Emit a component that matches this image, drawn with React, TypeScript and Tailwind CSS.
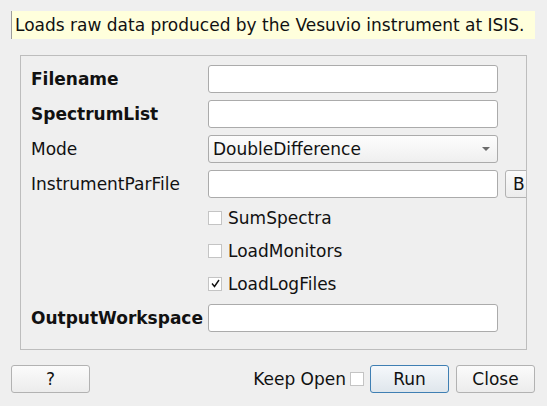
const font = { fontFamily: '"DejaVu Sans", "Liberation Sans", sans-serif' };

function TextBox() {
  return <div className="h-[28px] w-[290px] shrink-0 rounded-[3px] border border-[#ababab] bg-white" />;
}

function Check({ label, checked }: { label: string; checked?: boolean }) {
  return (
    <div className="flex h-[33px] items-center">
      <div className="flex h-[14px] w-[14px] shrink-0 items-center justify-center border border-[#c4c4c4] bg-white">
        {checked && (
          <svg width="9" height="9" viewBox="0 0 9 9">
            <path d="M1 4.5 L3.5 7.5 L8 1" fill="none" stroke="#111" strokeWidth="1.4" />
          </svg>
        )}
      </div>
      <span className="ml-[6px] pt-[2px]">{label}</span>
    </div>
  );
}

function Button({ children, primary, className = "" }: { children: React.ReactNode; primary?: boolean; className?: string }) {
  return (
    <button
      className={
        "flex h-[28px] w-[79px] shrink-0 items-center justify-center rounded-[3px] border pt-[2px] " +
        (primary
          ? "border-[#3f7fb3] bg-gradient-to-b from-[#f5f8fb] to-[#dfe6ec]"
          : "border-[#b2b2b2] bg-gradient-to-b from-[#fbfbfb] to-[#ececec]") +
        " " +
        className
      }
    >
      {children}
    </button>
  );
}

export default function App() {
  return (
    <div className="h-[406px] w-[547px] overflow-hidden bg-[#efefef] text-[17px] text-[#111]" style={font}>
      <div className="pl-[11px] pt-[11px]">
        <div className="flex h-[28px] w-[524px] items-center whitespace-nowrap border-l border-[#9d9d9d] bg-[#ffffdc] pl-[3px] pt-[2px]">
          Loads raw data produced by the Vesuvio instrument at ISIS.
        </div>
      </div>

      <div className="ml-[20px] mt-[16px] h-[295px] w-[507px] overflow-hidden border border-[#bdbdbd] pl-[10px] pt-[9px]">
        <div className="flex h-[28px] items-center">
          <span className="w-[177px] shrink-0 pt-[2px] font-bold">Filename</span>
          <TextBox />
        </div>
        <div className="mt-[7px] flex h-[28px] items-center">
          <span className="w-[177px] shrink-0 pt-[2px] font-bold">SpectrumList</span>
          <TextBox />
        </div>
        <div className="mt-[7px] flex h-[28px] items-center">
          <span className="w-[177px] shrink-0 pt-[2px]">Mode</span>
          <div className="flex h-[28px] w-[290px] shrink-0 items-center justify-between rounded-[3px] border border-[#ababab] bg-gradient-to-b from-[#fdfdfd] to-[#efefef] pl-[4px] pr-[7px]">
            <span className="pt-[2px]">DoubleDifference</span>
            <svg width="8" height="5" viewBox="0 0 8 5">
              <path d="M0 0 H8 L4 4 Z" fill="#6b6b6b" />
            </svg>
          </div>
        </div>
        <div className="mt-[7px] flex h-[28px] items-center">
          <span className="w-[177px] shrink-0 whitespace-nowrap pt-[2px]">InstrumentParFile</span>
          <TextBox />
          <div className="ml-[7px] flex h-[28px] w-[40px] shrink-0 items-center rounded-[3px] border border-[#b2b2b2] bg-gradient-to-b from-[#fbfbfb] to-[#ececec] pl-[7px] pt-[2px]">
            B
          </div>
        </div>
        <div className="ml-[177px] mt-[3px]">
          <Check label="SumSpectra" />
          <Check label="LoadMonitors" />
          <Check label="LoadLogFiles" checked />
        </div>
        <div className="mt-[4px] flex h-[28px] items-center">
          <span className="w-[177px] shrink-0 whitespace-nowrap pt-[2px] font-bold">OutputWorkspace</span>
          <TextBox />
        </div>
      </div>

      <div className="mt-[15px] flex items-center pl-[11px] pr-[12px]">
        <Button>?</Button>
        <div className="flex-1" />
        <span className="pt-[2px]">Keep Open</span>
        <div className="ml-[4px] h-[14px] w-[14px] shrink-0 border border-[#c4c4c4] bg-white" />
        <Button primary className="ml-[6px]">Run</Button>
        <Button className="ml-[7px]">Close</Button>
      </div>
    </div>
  );
}
